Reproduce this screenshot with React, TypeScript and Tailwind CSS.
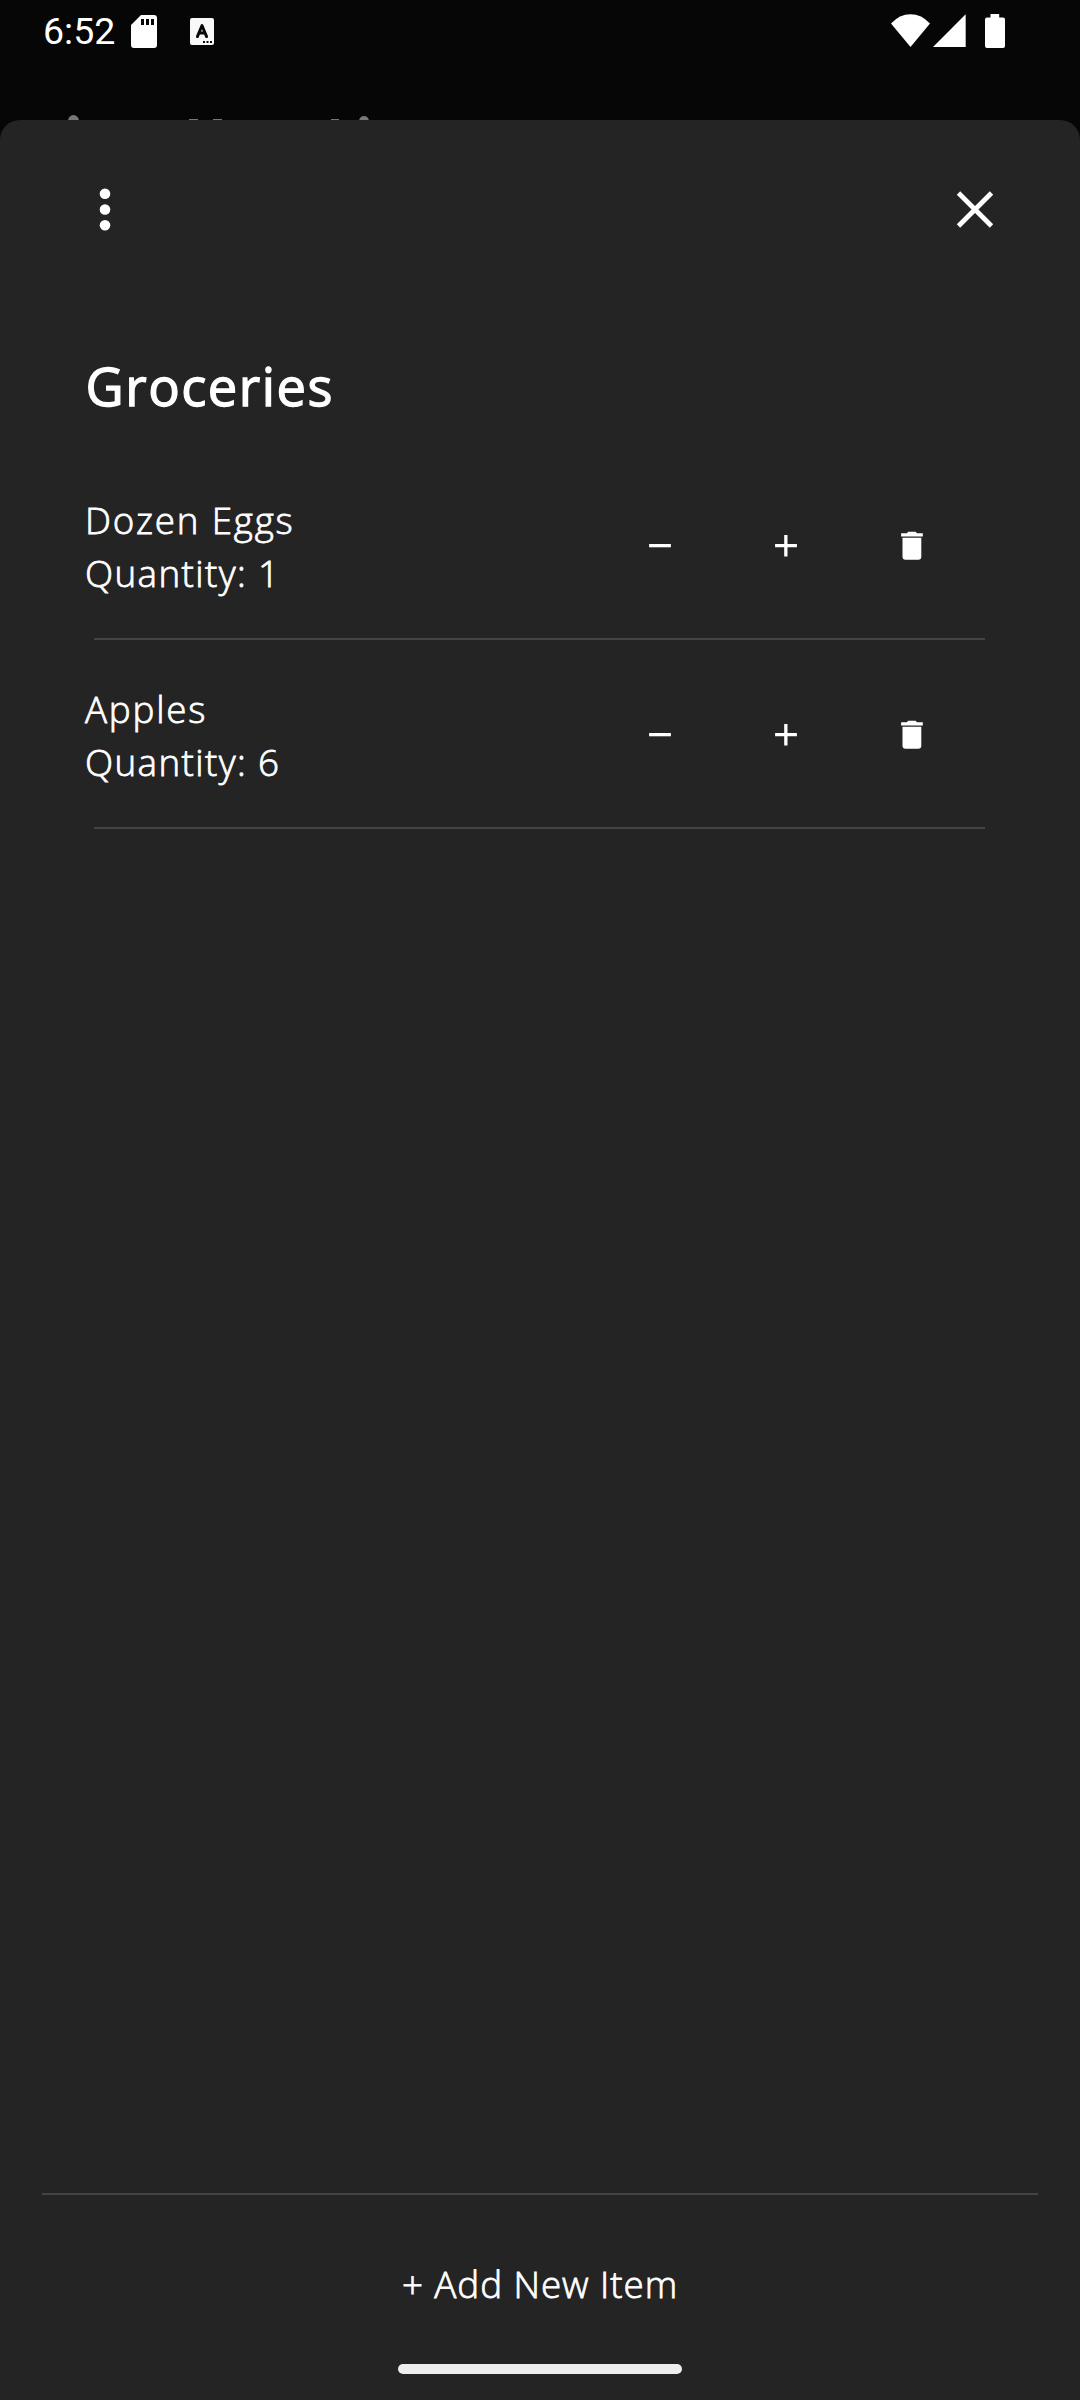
const ITEMS = [
  { name: 'Dozen Eggs', quantity: 1 },
  { name: 'Apples', quantity: 6 },
];

function StatusBar() {
  return (
    <header className="flex h-[62px] items-center justify-between pr-[75px] pl-[43px] font-['Roboto',sans-serif]">
      <div className="flex items-center pt-px">
        <span className="w-[88px] text-[37.5px] leading-[61px]">6:52</span>
        <svg width="26" height="33" viewBox="0 0 26 33" fill="currentColor">
          <path fillRule="evenodd" d="M10 0H23Q26 0 26 3V30Q26 33 23 33H3Q0 33 0 30V10ZM10 4V10H13V4ZM15 4V10H18V4ZM20 4V10H23V4Z" />
        </svg>
        <svg className="ml-[33px]" width="24" height="27" viewBox="0 0 24 27">
          <rect width="24" height="27" rx="2" fill="#f8f8f8" />
          <path d="M7.4 18.6L12 7.5L16.6 18.6M9 15H15" fill="none" stroke="#060606" strokeWidth="2.9" strokeLinecap="round" strokeLinejoin="round" />
          <path d="M13 23h2v2h-2zM16.5 23h2v2h-2zM20 23h2v2h-2z" fill="#060606" />
        </svg>
      </div>
      <div className="flex items-center">
        <svg width="39" height="34" viewBox="0 0 39 34" fill="currentColor">
          <path d="M0 9.5Q8.5 .2 19.5 .2T39 9.5L19.5 33Z" />
        </svg>
        <svg className="ml-[3px]" width="33" height="34" viewBox="0 0 33 34" fill="currentColor">
          <path d="M32.7 .3V33H0Z" />
        </svg>
        <svg className="ml-[19px]" width="20" height="34" viewBox="0 0 20 34" fill="currentColor">
          <path d="M5.5 0H14.2V3.4H18Q20 3.4 20 5.4V32Q20 34 18 34H2Q0 34 0 32V5.4Q0 3.4 2 3.4H5.5Z" />
        </svg>
      </div>
    </header>
  );
}

/* Tips of the title hidden behind the sheet */
function HiddenTitle() {
  return (
    <div className="flex h-[58px] items-end overflow-hidden pl-[68px]">
      <svg width="302" height="6" viewBox="68 114 302 6" fill="#777777">
        <circle cx="73.5" cy="120.5" r="5.4" />
        <path d="M189 119h9v1h-9zM213 119h9v1h-9zM331 119h8v1h-8z" />
        <circle cx="364" cy="121" r="5" />
      </svg>
    </div>
  );
}

function Item({ name, quantity }: { name: string; quantity: number }) {
  return (
    <li className="mb-[2px] h-[187px]">
      <div className="flex h-[146px] items-start">
        <div className="w-[512px] pt-[2px] text-[36.75px] leading-[53px] font-light [-webkit-text-stroke:0.8px_white]">
          <p className="tracking-[1.8px]">{name}</p>
          <p className="tracking-[1.4px]">Quantity: {quantity}</p>
        </div>
        <div className="flex pt-[39px]">
          <button aria-label="Decrease quantity" className="flex w-[126px] justify-center">
            <svg width="28" height="30" viewBox="0 0 28 30" fill="currentColor">
              <path d="M3.1 13h21.8v3.3H3.1z" />
            </svg>
          </button>
          <button aria-label="Increase quantity" className="flex w-[126px] justify-center">
            <svg width="28" height="30" viewBox="0 0 28 30" fill="currentColor">
              <path d="M3.1 13h9.1V4h3.3v9h9.4v3.3h-9.4v9.3h-3.3v-9.3H3.1z" />
            </svg>
          </button>
          <button aria-label="Delete item" className="flex w-[126px] justify-center">
            <svg width="28" height="30" viewBox="0 0 28 30" fill="currentColor">
              <path d="M3.1 2.2H8.8L10.2 .7H17.6L19 2.2H24.8V5.4H3.1ZM4.5 6.8H23.3V25.7Q23.3 28.7 20.3 28.7H7.5Q4.5 28.7 4.5 25.7Z" />
            </svg>
          </button>
        </div>
      </div>
      <div className="ml-[9px] h-[2px] w-[891px] bg-[#444444]" />
    </li>
  );
}

export default function App() {
  return (
    <div className="flex h-[2400px] w-[1080px] flex-col bg-[#060606] font-['Open_Sans',sans-serif] text-white">
      <StatusBar />
      <HiddenTitle />
      <main className="flex flex-1 flex-col rounded-t-[20px] bg-[#242424]">
        <div className="flex h-[179px] items-start justify-between pt-[68px] pr-[86px] pl-[99px]">
          <button aria-label="More options">
            <svg width="12" height="44" viewBox="0 0 12 44" fill="currentColor">
              <circle cx="6" cy="5.7" r="5.3" />
              <circle cx="6" cy="21.5" r="5.3" />
              <circle cx="6" cy="37.3" r="5.3" />
            </svg>
          </button>
          <button aria-label="Close">
            <svg width="38" height="44" viewBox="0 0 38 44" fill="none" stroke="currentColor" strokeWidth="4.8">
              <path d="M2.5 5L35.5 38M35.5 5L2.5 38" />
            </svg>
          </button>
        </div>
        <h1 className="mt-[51px] ml-[85.5px] text-[52.5px] leading-[72px] font-medium tracking-[1.5px] [-webkit-text-stroke:1.3px_white]">
          Groceries
        </h1>
        <ul className="mt-[70px] ml-[85px]">
          {ITEMS.map((item) => (
            <Item key={item.name} {...item} />
          ))}
        </ul>
        <footer className="mt-auto flex h-[207px] flex-col items-center">
          <div className="h-[2px] w-[996px] bg-[#444444]" />
          <button className="mt-[63px] text-[36.75px] leading-[53px] font-light tracking-[0.95px] [-webkit-text-stroke:0.8px_white]">
            + Add New Item
          </button>
          <div className="mt-[53px] h-[10px] w-[284px] rounded-full bg-[#eeeeee]" />
        </footer>
      </main>
    </div>
  );
}
